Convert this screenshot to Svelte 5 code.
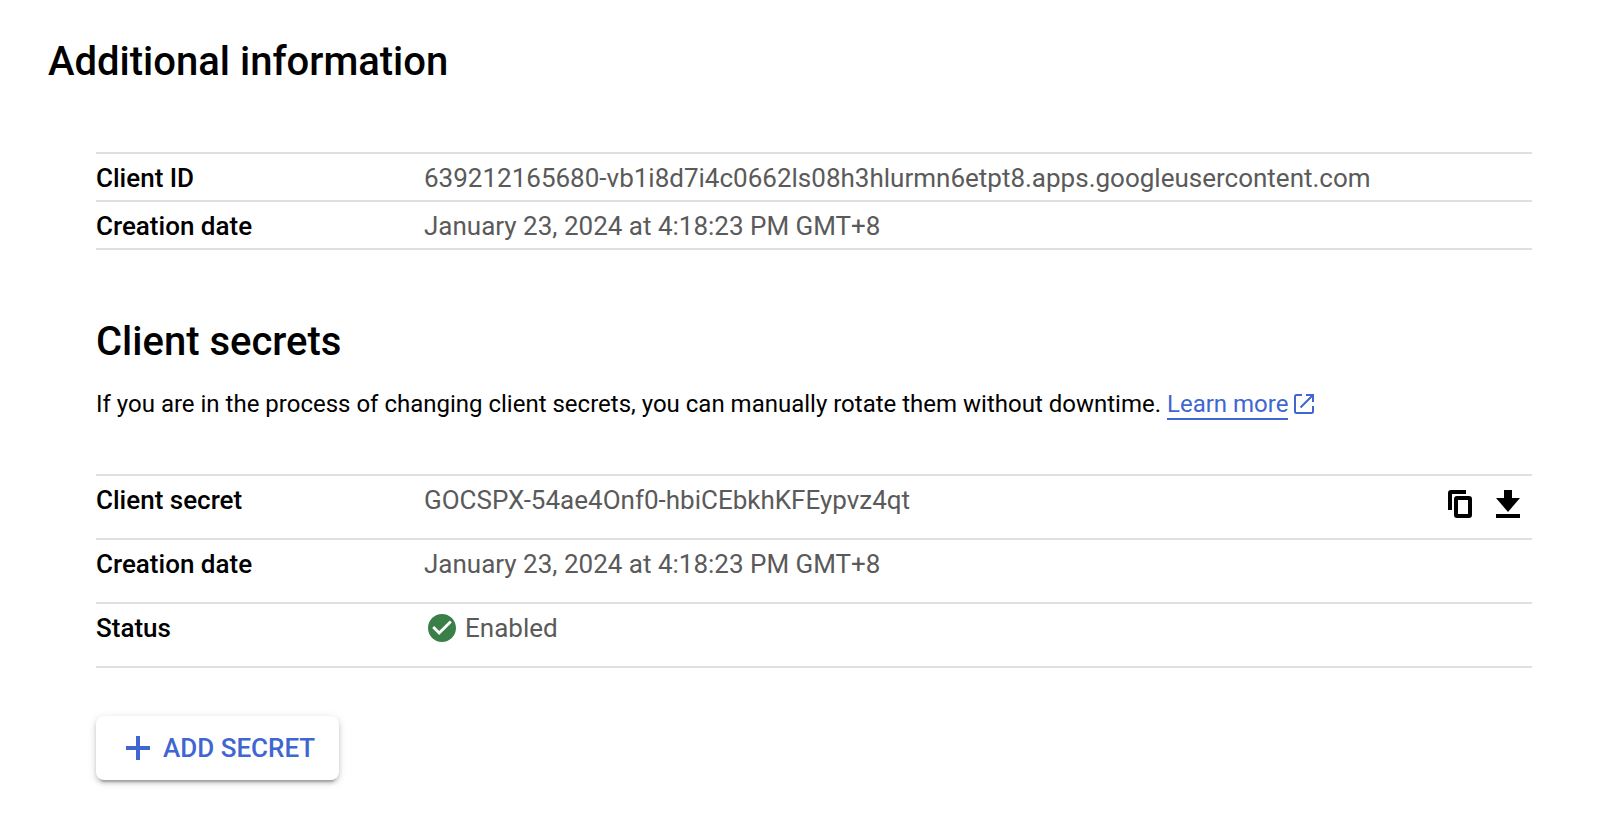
<script>
  const info = [
    { label: 'Client ID', value: '639212165680-vb1i8d7i4c0662ls08h3hlurmn6etpt8.apps.googleusercontent.com' },
    { label: 'Creation date', value: 'January 23, 2024 at 4:18:23 PM GMT+8' }
  ];
  const secret = [
    { label: 'Client secret', value: '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', actions: true },
    { label: 'Creation date', value: 'January 23, 2024 at 4:18:23 PM GMT+8' },
    { label: 'Status', value: 'Enabled', enabled: true }
  ];
</script>

<main>
  <h1>Additional information</h1>
  <section>
    <dl>
      {#each info as row}
        <div class="row">
          <dt>{row.label}</dt>
          <dd><span class="value">{row.value}</span></dd>
        </div>
      {/each}
    </dl>

    <h2>Client secrets</h2>
    <p>
      <span class="lead">If you are in the process of changing client secrets, you can manually rotate them without downtime.</span>
      <a href="#learn"><span class="link">Learn more</span><svg width="20" height="20" viewBox="0 0 20 20" fill="none" stroke="currentColor" stroke-width="2"><path d="M8 1H2.5Q1 1 1 2.500V17.500Q1 19 2.500 19H17.500Q19 19 19 17.500V12M12 1H19V8M19 1L6.500 13.500" /></svg></a>
    </p>

    <dl class="tall">
      {#each secret as row}
        <div class="row">
          <dt>{row.label}</dt>
          <dd>
            {#if row.enabled}
              <svg class="check" width="28" height="28" viewBox="2 2 20 20"><path fill="#3a7f48" d="M12 2C6.480 2 2 6.480 2 12s4.480 10 10 10 10-4.480 10-10S17.520 2 12 2zm-2 15l-5-5 1.410-1.410L10 14.170l7.590-7.590L19 8l-9 9z" /></svg>
            {/if}
            <span class="value">{row.value}</span>
          </dd>
          {#if row.actions}
            <div class="actions">
              <svg width="24" height="28" viewBox="0 0 24 28" fill="none" stroke="#000" stroke-width="4"><path d="M2 20V3Q2 2 3 2H18" /><rect x="8" y="8" width="14" height="18" rx="1" /></svg>
              <svg width="24" height="28" viewBox="0 0 24 28"><path d="M8 0h8v8h8L12 22 0 8h8zM0 24h24v4H0z" /></svg>
            </div>
          {/if}
        </div>
      {/each}
    </dl>

    <button>
      <svg width="24" height="24" viewBox="0 0 24 24" fill="currentColor"><path d="M10 0h4v10h10v4H14v10h-4V14H0v-4h10z" /></svg>
      <span class="caption">ADD SECRET</span>
    </button>
  </section>
</main>

<style>
  :global(body) { background: #fff; }
  main {
    box-sizing: border-box;
    height: 824px;
    padding: 38px 72px 0 48px;
    overflow: hidden;
    font-family: Roboto, sans-serif;
    color: #000;
    -webkit-font-smoothing: antialiased;
  }
  h1, h2 {
    margin: 0;
    font-size: 40px;
    line-height: 48px;
    font-weight: 500;
    white-space: nowrap;
  }
  section {
    display: flex;
    flex-direction: column;
    align-items: flex-start;
    padding: 66px 0 0 48px;
  }
  dl {
    width: 100%;
    margin: 0;
    border-top: 2px solid #e0e0e0;
    font-size: 26px;
    line-height: 32px;
  }
  .row {
    display: flex;
    box-sizing: border-box;
    height: 48px;
    padding-top: 8px;
    border-bottom: 2px solid #e0e0e0;
  }
  .tall .row { height: 64px; }
  dt { width: 328px; font-weight: 500; }
  dd {
    display: flex;
    flex: 1;
    margin: 0;
    color: #5a5a5a;
    white-space: nowrap;
  }
  .check { margin: 2px 9px 0 4px; }
  .actions {
    display: flex;
    gap: 24px;
    padding: 6px 12px 0 0;
  }
  svg { flex: none; display: block; }
  h2 { margin-top: 68px; }
  p {
    display: flex;
    gap: 6px;
    margin: 22px 0 0;
    font-size: 24px;
    line-height: 32px;
    white-space: nowrap;
  }
  a {
    display: flex;
    gap: 6px;
    color: #4066d1;
    text-decoration: none;
  }
  .link { height: 30px; border-bottom: 2px solid; }
  a svg { margin-top: 6px; }
  .tall { margin-top: 54px; }
  button {
    display: flex;
    align-items: center;
    box-sizing: border-box;
    width: 243px;
    height: 64px;
    margin-top: 48px;
    padding: 0 0 0 30px;
    gap: 13px;
    border: 0;
    border-radius: 8px;
    background: #fff;
    color: #4066d1;
    font: 500 26px/32px Roboto, sans-serif;
    white-space: nowrap;
    box-shadow: 0 6px 2px -4px rgba(0,0,0,.2), 0 3px 4px rgba(0,0,0,.16), 0 2px 10px rgba(0,0,0,.12);
  }
</style>
